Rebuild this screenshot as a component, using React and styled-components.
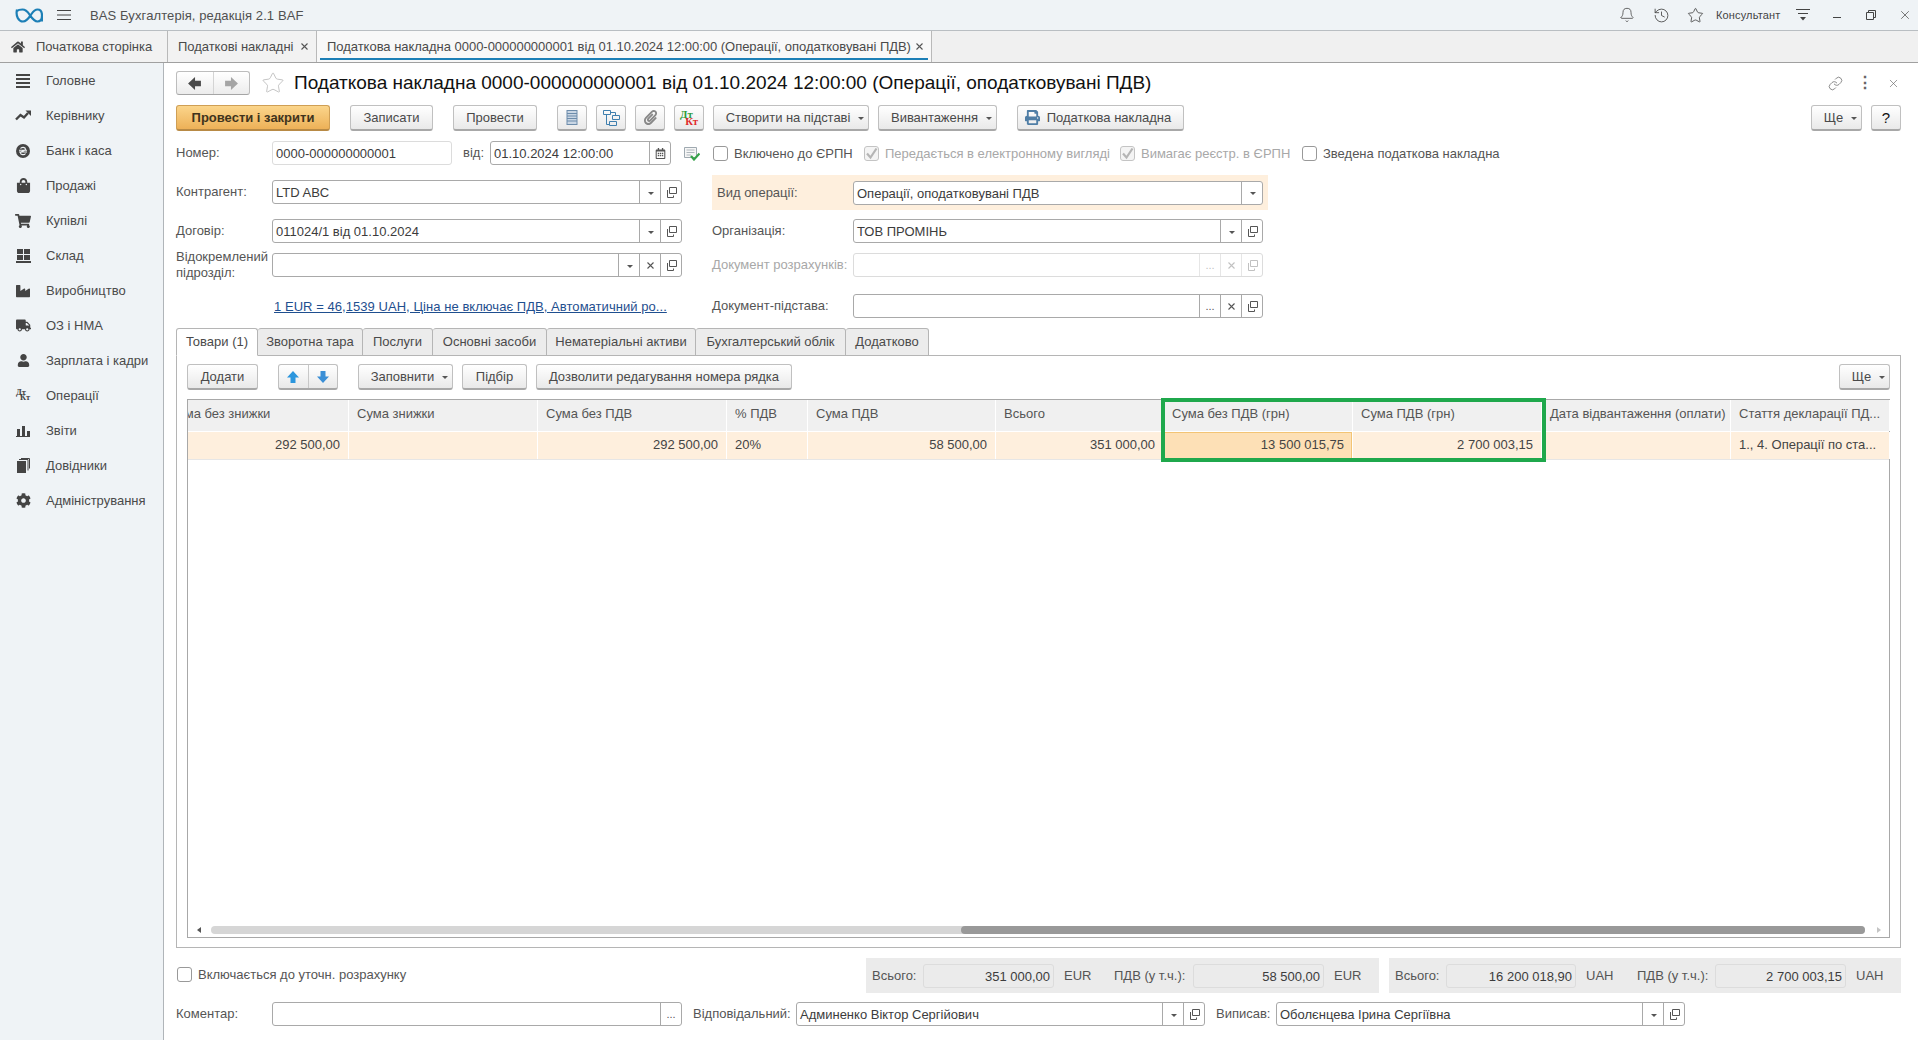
import React from "react";
import styled, { createGlobalStyle } from "styled-components";
import { Bell, History, Star, Link, X } from "lucide-react";
import {
  FaHome,
  FaShoppingBag,
  FaShoppingCart,
  FaIndustry,
  FaTruck,
  FaUser,
  FaCog,
  FaPrint,
  FaPaperclip,
  FaRegCalendarAlt,
} from "react-icons/fa";

const GlobalStyle = createGlobalStyle`
  html, body {
    margin: 0;
    padding: 0;
    height: 100%;
    overflow: hidden;
    background: #fff;
    font-family: "Liberation Sans", Arial, sans-serif;
    font-size: 13px;
    color: #4a4a4a;
  }
  * { box-sizing: border-box; }
`;

const AppWrap = styled.div`
  display: flex;
  flex-direction: column;
  width: 1918px;
  height: 1040px;
`;

/* top bar */
const TopBar = styled.div`
  display: flex;
  align-items: center;
  height: 31px;
  flex: none;
  padding-left: 15px;
  background: #eff3f6;
  border-bottom: 1px solid #b9bec2;
`;
const AppTitle = styled.div`
  margin-left: 5px;
  color: #505050;
  letter-spacing: 0.1px;
  white-space: nowrap;
`;
const TopIcons = styled.div`
  display: flex;
  align-items: center;
  margin-left: auto;
  color: #444;
`;
const TopIcon = styled.div`
  display: flex;
  align-items: center;
  justify-content: center;
  width: ${(p) => p.$w || 34}px;
`;
const Consultant = styled.div`
  font-size: 11px;
  width: 66px;
  margin-left: 4px;
  letter-spacing: 0.15px;
  white-space: nowrap;
`;

/* open windows */
const TabBar = styled.div`
  display: flex;
  height: 32px;
  flex: none;
  background: #f0f0f0;
  border-bottom: 1px solid #a0a0a0;
`;
const WinTab = styled.div`
  position: relative;
  display: flex;
  align-items: center;
  width: ${(p) => p.$w}px;
  padding-left: ${(p) => p.$pl || 10}px;
  border-right: 1px solid #b9b9b9;
  background: ${(p) => (p.$active ? "#f8f8f8" : "#f2f2f2")};
  letter-spacing: -0.03px;
  white-space: nowrap;
  color: #4a4a4a;
  &::after {
    content: "";
    display: ${(p) => (p.$active ? "block" : "none")};
    position: absolute;
    left: 3px;
    right: 3px;
    bottom: 2px;
    height: 2px;
    background: #1c7fb6;
  }
`;
const WinTabLabel = styled.span`
  margin-left: 11px;
`;
const WinClose = styled.span`
  display: inline-flex;
  margin-left: auto;
  margin-right: 8px;
  color: #555;
`;

const Body = styled.div`
  display: flex;
  flex: 1;
  min-height: 0;
`;

/* left menu */
const Sidebar = styled.div`
  width: 164px;
  flex: none;
  background: #eff3f6;
  border-right: 1px solid #b0b5b9;
`;
const NavItem = styled.div`
  display: flex;
  align-items: center;
  height: 35px;
  color: #4a4a4a;
`;
const NavIcon = styled.div`
  display: flex;
  align-items: center;
  justify-content: center;
  width: 46px;
  color: #444;
`;
const DtKt = styled.div`
  position: relative;
  width: ${(p) => p.$size}px;
  height: ${(p) => p.$size}px;
  font-family: "Liberation Serif", serif;
  font-weight: bold;
  font-size: ${(p) => p.$size * 0.6}px;
  line-height: 1;
`;
const Dt = styled.span`
  position: absolute;
  left: 0;
  top: 0;
  color: ${(p) => p.$c};
`;
const Kt = styled.span`
  position: absolute;
  right: 0;
  bottom: 0;
  color: ${(p) => p.$c};
`;

/* document form */
const Main = styled.div`
  display: flex;
  flex-direction: column;
  flex: 1;
  min-width: 0;
  padding: 8px 17px 14px 12px;
`;
const HeadRow = styled.div`
  display: flex;
  align-items: center;
  height: 24px;
  flex: none;
`;
const NavGroup = styled.div`
  display: flex;
  width: 74px;
  height: 24px;
  border: 1px solid #bdbdbd;
  border-bottom-color: #a5a5a5;
  border-radius: 3px;
  background: linear-gradient(#fff, #ececec);
`;
const NavBtn = styled.div`
  display: flex;
  align-items: center;
  justify-content: center;
  flex: 1;
  color: ${(p) => p.$c};
  & + & {
    border-left: 1px solid #d4d4d4;
  }
`;
const TitleStar = styled(Star)`
  margin-left: 11px;
`;
const DocTitle = styled.div`
  margin-left: 9px;
  font-size: 19px;
  color: #111;
  white-space: nowrap;
`;
const HeadIcons = styled.div`
  display: flex;
  align-items: center;
  gap: 14px;
  margin-left: auto;
  margin-right: 1px;
  color: #666;
`;
const Dots = styled.div`
  width: 16px;
  text-align: center;
  font-size: 16px;
  font-weight: bold;
  line-height: 10px;
`;

const ButtonRow = styled.div`
  display: flex;
  align-items: center;
  flex: none;
  margin-top: ${(p) => p.$mt || 0}px;
`;
const Btn = styled.div`
  display: flex;
  align-items: center;
  justify-content: center;
  gap: ${(p) => p.$gap || 6}px;
  flex: none;
  width: ${(p) => p.$w}px;
  height: 26px;
  margin-left: ${(p) => p.$ml || 0}px;
  padding-right: ${(p) => p.$pr || 0}px;
  border: 1px solid #c0c0c0;
  border-bottom: 2px solid #a8a8a8;
  border-radius: 3px;
  background: linear-gradient(#fff, #e9e9e9);
  color: #4a4a4a;
  white-space: nowrap;
`;
const DefaultBtn = styled(Btn)`
  border-color: #cf9f55;
  border-bottom-color: #b88a45;
  background: linear-gradient(#fbd58b, #edb158);
  color: #40331c;
  font-weight: bold;
`;
const MenuBtn = styled(Btn)`
  padding-left: 8px;
  letter-spacing: -0.05px;
`;
const MoreBtn = styled(MenuBtn)`
  margin-left: auto;
`;
const HelpBtn = styled(Btn)`
  color: #111;
  font-size: 15px;
`;
const Caret = styled.span`
  display: inline-block;
  width: 0;
  height: 0;
  margin-left: 2px;
  margin-top: 2px;
  border-left: 3px solid transparent;
  border-right: 3px solid transparent;
  border-top: 3px solid #555;
`;
const ArrowGroup = styled.div`
  display: flex;
  width: 60px;
  height: 26px;
  margin-left: 20px;
  border: 1px solid #c0c0c0;
  border-bottom: 2px solid #a8a8a8;
  border-radius: 3px;
  background: linear-gradient(#fff, #e9e9e9);
`;
const ArrowCell = styled.div`
  display: flex;
  align-items: center;
  justify-content: center;
  flex: 1;
  & + & {
    border-left: 1px solid #c8c8c8;
  }
`;

const FormRow = styled.div`
  display: flex;
  align-items: center;
  flex: none;
  height: 24px;
  margin-top: ${(p) => p.$mt || 0}px;
`;
const Label = styled.div`
  flex: none;
  width: ${(p) => p.$w}px;
  margin-left: ${(p) => p.$ml || 0}px;
  color: ${(p) => (p.$off ? "#a8a8a8" : "#555")};
  line-height: 16px;
  white-space: nowrap;
`;
const FieldBox = styled.div`
  display: flex;
  flex: none;
  width: ${(p) => p.$w}px;
  height: 24px;
  border: 1px solid ${(p) => (p.$soft ? "#dcdcdc" : "#a9a9a9")};
  border-radius: 3px;
  background: ${(p) => (p.$gray ? "#ebebeb" : "#fff")};
`;
const FieldText = styled.div`
  flex: 1;
  min-width: 0;
  padding: 0 3px;
  line-height: 23px;
  color: #3c3c3c;
  text-align: ${(p) => (p.$right ? "right" : "left")};
  white-space: nowrap;
  overflow: hidden;
`;
const FieldBtn = styled.div`
  display: flex;
  align-items: center;
  justify-content: center;
  flex: none;
  width: 21px;
  border-left: 1px solid ${(p) => (p.$soft ? "#dcdcdc" : "#a9a9a9")};
  color: ${(p) => (p.$soft ? "#a8a8a8" : "#555")};
  font-size: 11px;
  opacity: ${(p) => (p.$soft ? 0.7 : 1)};
`;
const CheckWrap = styled.div`
  display: flex;
  align-items: center;
  flex: none;
  width: ${(p) => p.$w}px;
  margin-left: ${(p) => p.$ml || 0}px;
  color: ${(p) => (p.$off ? "#a8a8a8" : "#555")};
  white-space: nowrap;
`;
const CheckBox = styled.span`
  display: flex;
  align-items: center;
  justify-content: center;
  width: 15px;
  height: 15px;
  margin-right: 6px;
  flex: none;
  border: 1px solid ${(p) => (p.$off ? "#c4c4c4" : "#999")};
  border-radius: 3px;
  background: ${(p) => (p.$off ? "#f4f4f4" : "#fff")};
`;

const Columns = styled.div`
  display: flex;
  flex: none;
  margin-top: 10px;
`;
const LeftCol = styled.div`
  width: 536px;
  flex: none;
  padding-top: 5px;
`;
const RightCol = styled.div`
  width: 556px;
  flex: none;
`;
const Peach = styled.div`
  display: flex;
  align-items: center;
  height: 35px;
  padding-left: 5px;
  background: #feefdd;
`;
const DocLink = styled.a`
  margin-left: 96px;
  padding-left: 2px;
  color: #1f4f8f;
  text-decoration: underline;
  letter-spacing: 0.05px;
  white-space: nowrap;
`;

/* tabbed part */
const TabStrip = styled.div`
  display: flex;
  flex: none;
  height: 28px;
  margin-top: 10px;
  margin-bottom: -1px;
  position: relative;
`;
const PageTab = styled.div`
  display: flex;
  align-items: center;
  justify-content: center;
  width: ${(p) => p.$w}px;
  padding-bottom: 2px;
  border: 1px solid #b5b5b5;
  border-left-width: ${(p) => (p.$first ? 1 : 0)}px;
  border-bottom-color: ${(p) => (p.$active ? "#fff" : "#b5b5b5")};
  border-radius: 3px 3px 0 0;
  background: ${(p) => (p.$active ? "#fff" : "#ececec")};
  color: #4a4a4a;
  white-space: nowrap;
`;
const Panel = styled.div`
  display: flex;
  flex-direction: column;
  flex: 1;
  min-height: 0;
  padding: 8px 10px 9px 10px;
  border: 1px solid #b5b5b5;
`;
const Table = styled.div`
  position: relative;
  display: flex;
  flex-direction: column;
  flex: 1;
  min-height: 0;
  margin-top: 9px;
  border: 1px solid #a8a8a8;
`;
const Row = styled.div`
  display: flex;
  flex: none;
  height: ${(p) => p.$h}px;
  background: ${(p) => p.$bg};
  border-bottom: 1px solid ${(p) => p.$line};
`;
const HeadCell = styled.div`
  flex: none;
  width: ${(p) => p.$w}px;
  padding-left: ${(p) => (p.$clip ? 0 : 8)}px;
  line-height: 28px;
  color: #555;
  border-right: 1px solid #fff;
  white-space: nowrap;
  overflow: hidden;
  text-indent: ${(p) => (p.$clip ? -19 : 0)}px;
`;
const Cell = styled.div`
  flex: none;
  width: ${(p) => p.$w}px;
  padding: 0 8px;
  line-height: 25px;
  color: #444;
  text-align: ${(p) => (p.$left ? "left" : "right")};
  border-right: 1px solid #fff;
  white-space: nowrap;
  overflow: hidden;
  background: ${(p) => (p.$current ? "#fde0b6" : "transparent")};
  box-shadow: ${(p) => (p.$current ? "inset 0 0 0 1px #f3c474" : "none")};
`;
const Highlight = styled.div`
  position: absolute;
  left: 973px;
  top: -2px;
  width: 385px;
  height: 64px;
  border: 4px solid #1fa84c;
  pointer-events: none;
`;
const ScrollRow = styled.div`
  display: flex;
  align-items: center;
  flex: none;
  height: 8px;
  margin-top: auto;
  margin-bottom: 3px;
  padding: 0 8px 0 9px;
`;
const ScrollTrack = styled.div`
  flex: 1;
  height: 8px;
  margin: 0 12px 0 10px;
  border-radius: 4px;
  background: #d6d6d6;
  display: flex;
  justify-content: flex-end;
`;
const ScrollThumb = styled.div`
  width: 904px;
  height: 8px;
  border-radius: 4px;
  background: #999;
`;
const ScrollArrow = styled.span`
  width: 0;
  height: 0;
  border-top: 3px solid transparent;
  border-bottom: 3px solid transparent;
  ${(p) =>
    p.$left
      ? "border-right: 4px solid #555;"
      : "border-left: 4px solid #c4c4c4;"}
`;

/* footer */
const TotalsLine = styled.div`
  display: flex;
  align-items: center;
  flex: none;
  height: 35px;
  margin-top: 10px;
`;
const TotalCheck = styled(CheckWrap)`
  padding-bottom: 2px;
  padding-left: 1px;
`;
const TotalGroup = styled.div`
  display: flex;
  align-items: center;
  flex: none;
  width: ${(p) => p.$w}px;
  height: 35px;
  margin-left: ${(p) => p.$ml}px;
  padding-left: 6px;
  background: #ebebeb;
`;
const Unit = styled.div`
  flex: none;
  width: ${(p) => p.$w}px;
  padding-left: 10px;
  color: #555;
`;

const columns = [
  { title: "Сума без знижки", value: "292 500,00", w: 161, clip: true },
  { title: "Сума знижки", value: "", w: 189 },
  { title: "Сума без ПДВ", value: "292 500,00", w: 189 },
  { title: "% ПДВ", value: "20%", w: 81, left: true },
  { title: "Сума ПДВ", value: "58 500,00", w: 188 },
  { title: "Всього", value: "351 000,00", w: 168 },
  { title: "Сума без ПДВ (грн)", value: "13 500 015,75", w: 189, current: true },
  { title: "Сума ПДВ (грн)", value: "2 700 003,15", w: 189 },
  { title: "Дата відвантаження (оплати)", value: "", w: 189 },
  { title: "Стаття декларації ПД...", value: "1., 4. Операції по ста...", w: 159, left: true },
];

const pageTabs = [
  { name: "Товари (1)", w: 82, active: true },
  { name: "Зворотна тара", w: 105 },
  { name: "Послуги", w: 70 },
  { name: "Основні засоби", w: 114 },
  { name: "Нематеріальні активи", w: 149 },
  { name: "Бухгалтерський облік", w: 150 },
  { name: "Додатково", w: 83 },
];

const LogoMark = () => (
  <svg width="28" height="15" viewBox="0 0 28 15" fill="none" stroke="#1c7fb6" strokeWidth="2.2">
    <path d="M2 1.5C0.5 8 3.5 13.5 8 13.5C12 13.5 14.5 9 16.5 6C18.5 3 20 1.5 22.5 1.5C25.5 1.5 27 4 27 7.5V13.5M27 7.5C27 11 25.5 13.5 22.5 13.5C19 13.5 16.5 9.5 14.5 6.5C12.5 3.5 10.5 1.5 7.5 1.5C5.5 1.5 3.5 1.5 2 3" />
  </svg>
);

const Burger = () => (
  <svg width="14" height="12" viewBox="0 0 14 12" stroke="#444" strokeWidth="1">
    <path d="M0 1.5H14M0 6H14M0 10.5H14" />
  </svg>
);

const LinesIcon = () => (
  <svg width="14" height="14" viewBox="0 0 14 14" fill="#444">
    <path d="M0 0h14v2H0zM0 4h14v2H0zM0 8h14v2H0zM0 12h14v2H0z" />
  </svg>
);

const TrendIcon = () => (
  <svg width="16" height="11" viewBox="0 0 16 11">
    <path d="M1 9.5L5.5 5L9 7.5L13 3" fill="none" stroke="#444" strokeWidth="2.4" />
    <path d="M10.5 0.5H16V6z" fill="#444" />
  </svg>
);

const BankIcon = () => (
  <svg width="14" height="14" viewBox="0 0 14 14">
    <circle cx="7" cy="7" r="7" fill="#444" />
    <path d="M4.5 4.6C5.5 2.8 9.5 3 9.5 5.2C9.5 7.2 4.5 6.8 4.5 8.9C4.5 11 8.5 11.2 9.5 9.4M3 6.2H11M3 8H11" fill="none" stroke="#eff3f6" strokeWidth="1.1" />
  </svg>
);

const GridIcon = () => (
  <svg width="15" height="14" viewBox="0 0 15 14" fill="#444">
    <path d="M1 0h6v5H1zM8 0h6v5H8zM1 6h6v5H1zM8 6h6v5H8zM0 12h15v2H0z" />
  </svg>
);

const BarsIcon = () => (
  <svg width="14" height="12" viewBox="0 0 14 12" fill="#444">
    <path d="M1 4h3v7H1zM6 1h3v10H6zM11 6h3v5h-3zM0 11h14v1H0z" />
  </svg>
);

const BooksIcon = () => (
  <svg width="13" height="15" viewBox="0 0 13 15">
    <path d="M0 3h9v12H0z" fill="#444" />
    <path d="M2 1.5h9v11M4 0.5h8.5v10" fill="none" stroke="#444" strokeWidth="1" />
  </svg>
);

// block arrow pointing up, rotated for the other directions
const BlockArrow = ({ color, rotate = 0, size = 14 }) => (
  <svg width={size} height={size} viewBox="0 0 14 14" transform={`rotate(${rotate})`}>
    <path d="M7 1L13 7.5H9.5V13H4.5V7.5H1z" fill={color} />
  </svg>
);

const menu = [
  { name: "Головне", icon: <LinesIcon /> },
  { name: "Керівнику", icon: <TrendIcon /> },
  { name: "Банк і каса", icon: <BankIcon /> },
  { name: "Продажі", icon: <FaShoppingBag size={15} /> },
  { name: "Купівлі", icon: <FaShoppingCart size={16} /> },
  { name: "Склад", icon: <GridIcon /> },
  { name: "Виробництво", icon: <FaIndustry size={14} /> },
  { name: "ОЗ і НМА", icon: <FaTruck size={15} /> },
  { name: "Зарплата і кадри", icon: <FaUser size={13} /> },
  {
    name: "Операції",
    icon: (
      <DtKt $size={14}>
        <Dt $c="#444">Дт</Dt>
        <Kt $c="#444">Кт</Kt>
      </DtKt>
    ),
  },
  { name: "Звіти", icon: <BarsIcon /> },
  { name: "Довідники", icon: <BooksIcon /> },
  { name: "Адміністрування", icon: <FaCog size={15} /> },
];

const OpenIcon = () => (
  <svg width="11" height="11" viewBox="0 0 11 11" fill="none" stroke="currentColor" strokeWidth="1">
    <path d="M3.5 0.5h7v6h-7zM1.5 3v7.5H7.5V8.5" />
  </svg>
);

const ClearIcon = () => (
  <svg width="7" height="7" viewBox="0 0 7 7" stroke="currentColor" strokeWidth="1.1">
    <path d="M0.5 0.5L6.5 6.5M6.5 0.5L0.5 6.5" />
  </svg>
);

const buttonIcons = {
  drop: <Caret />,
  clear: <ClearIcon />,
  open: <OpenIcon />,
  dots: "...",
  cal: <FaRegCalendarAlt size={11} />,
};

const Field = ({ w, value, buttons = [], soft, gray, right }) => (
  <FieldBox $w={w} $soft={soft} $gray={gray}>
    <FieldText $right={right}>{value}</FieldText>
    {buttons.map((b) => (
      <FieldBtn key={b} $soft={soft}>
        {buttonIcons[b]}
      </FieldBtn>
    ))}
  </FieldBox>
);

const Check = ({ w, checked, off, children }) => (
  <CheckWrap $w={w} $off={off}>
    <CheckBox $off={off}>
      {checked && (
        <svg width="13" height="13" viewBox="0 0 13 13" fill="none" stroke="#b5b5b5" strokeWidth="2.2">
          <path d="M2 6.5L5.5 10.5L11.5 1.5" />
        </svg>
      )}
    </CheckBox>
    {children}
  </CheckWrap>
);

const RegisterIcon = () => (
  <svg width="12" height="15" viewBox="0 0 12 15">
    <rect x="1" y="0.5" width="10" height="14" fill="#c9d6e4" stroke="#6c8cab" />
    <path d="M1 3.5H11M1 6H11M1 8.5H11M1 11H11" stroke="#6c8cab" />
  </svg>
);

const StructureIcon = () => (
  <svg width="17" height="16" viewBox="0 0 17 16" fill="none" stroke="#3f7fae" strokeWidth="1">
    <path d="M0.5 0.5h7v4h-7zM9.5 5.5h7v4h-7zM6.5 11.5h7v4h-7zM3.5 4.5v10h3M7.5 2.5h5v3" />
  </svg>
);

const DocCheckIcon = () => (
  <svg width="16" height="15" viewBox="0 0 16 15">
    <path d="M0.5 1.5h12v10h-12z" fill="#f6f6f6" stroke="#9fa9b0" />
    <path d="M2.5 4H10.5M2.5 6.5H10.5M2.5 9H7" stroke="#aeb6bc" />
    <path d="M7 10L10 13.5L15.5 7.5" fill="none" stroke="#37a24a" strokeWidth="2.2" />
  </svg>
);

const FilterIcon = () => (
  <svg width="16" height="14" viewBox="0 0 16 14" fill="#444">
    <path d="M1 1h14v1H1zM3 5h10v1H3z" />
    <path d="M5 9h6l-3 3.5z" />
  </svg>
);

const App = () => {
  return (
    <AppWrap>
      <GlobalStyle />
      <TopBar>
        <LogoMark />
        <TopIcon $w={42}>
          <Burger />
        </TopIcon>
        <AppTitle>BAS Бухгалтерія, редакція 2.1 BAF</AppTitle>
        <TopIcons>
          <TopIcon>
            <Bell size={16} strokeWidth={1.2} />
          </TopIcon>
          <TopIcon>
            <History size={17} strokeWidth={1.2} />
          </TopIcon>
          <TopIcon>
            <Star size={17} strokeWidth={1.2} />
          </TopIcon>
          <Consultant>Консультант</Consultant>
          <TopIcon $w={42}>
            <FilterIcon />
          </TopIcon>
          <TopIcon $w={26}>
            <svg width="10" height="10" viewBox="0 0 10 10" stroke="#444">
              <path d="M1 7.5H9" />
            </svg>
          </TopIcon>
          <TopIcon $w={42}>
            <svg width="10" height="10" viewBox="0 0 10 10" fill="none" stroke="#444">
              <path d="M0.5 2.5h7v7h-7zM2.5 2.5v-2h7v7h-2" />
            </svg>
          </TopIcon>
          <TopIcon $w={26}>
            <X size={14} strokeWidth={1.2} />
          </TopIcon>
        </TopIcons>
      </TopBar>

      <TabBar>
        <WinTab $w={168} $pl={11}>
          <FaHome size={14} color="#444" />
          <WinTabLabel>Початкова сторінка</WinTabLabel>
        </WinTab>
        <WinTab $w={149} $pl={10}>
          Податкові накладні
          <WinClose>
            <ClearIcon />
          </WinClose>
        </WinTab>
        <WinTab $w={615} $pl={10} $active>
          Податкова накладна 0000-000000000001 від 01.10.2024 12:00:00 (Операції, оподатковувані ПДВ)
          <WinClose>
            <ClearIcon />
          </WinClose>
        </WinTab>
      </TabBar>

      <Body>
        <Sidebar>
          {menu.map((m) => (
            <NavItem key={m.name}>
              <NavIcon>{m.icon}</NavIcon>
              {m.name}
            </NavItem>
          ))}
        </Sidebar>

        <Main>
          <HeadRow>
            <NavGroup>
              <NavBtn $c="#4a4a4a">
                <BlockArrow color="#4a4a4a" rotate={-90} size={15} />
              </NavBtn>
              <NavBtn $c="#a5a5a5">
                <BlockArrow color="#a5a5a5" rotate={90} size={15} />
              </NavBtn>
            </NavGroup>
            <TitleStar size={24} strokeWidth={0.8} color="#b5b5b5" />
            <DocTitle>
              Податкова накладна 0000-000000000001 від 01.10.2024 12:00:00 (Операції, оподатковувані ПДВ)
            </DocTitle>
            <HeadIcons>
              <Link size={15} strokeWidth={1.2} />
              <Dots>⋮</Dots>
              <X size={13} strokeWidth={1.2} />
            </HeadIcons>
          </HeadRow>

          <ButtonRow $mt={10}>
            <DefaultBtn $w={154}>Провести і закрити</DefaultBtn>
            <Btn $w={83} $ml={20}>Записати</Btn>
            <Btn $w={84} $ml={20}>Провести</Btn>
            <Btn $w={30} $ml={20}><RegisterIcon /></Btn>
            <Btn $w={30} $ml={9}><StructureIcon /></Btn>
            <Btn $w={30} $ml={9}><FaPaperclip size={15} color="#888" /></Btn>
            <Btn $w={30} $ml={9}>
              <DtKt $size={18}>
                <Dt $c="#2e9b3a">Дт</Dt>
                <Kt $c="#e0292b">Кт</Kt>
              </DtKt>
            </Btn>
            <MenuBtn $w={156} $ml={9}>Створити на підставі <Caret /></MenuBtn>
            <MenuBtn $w={119} $ml={9}>Вивантаження <Caret /></MenuBtn>
            <Btn $w={167} $ml={20} $pr={5} $gap={7}>
              <FaPrint size={15} color="#4f7ea6" />
              Податкова накладна
            </Btn>
            <MoreBtn $w={51}>Ще <Caret /></MoreBtn>
            <HelpBtn $w={30} $ml={9}>?</HelpBtn>
          </ButtonRow>

          <FormRow $mt={10}>
            <Label $w={96}>Номер:</Label>
            <Field w={180} value="0000-000000000001" soft />
            <Label $w={27} $ml={11}>від:</Label>
            <Field w={181} value="01.10.2024 12:00:00" buttons={["cal"]} />
            <CheckWrap $w={29} $ml={13}>
              <DocCheckIcon />
            </CheckWrap>
            <Check w={151}>Включено до ЄРПН</Check>
            <Check w={256} checked off>Передається в електронному вигляді</Check>
            <Check w={182} checked off>Вимагає реєстр. в ЄРПН</Check>
            <Check w={220}>Зведена податкова накладна</Check>
          </FormRow>

          <Columns>
            <LeftCol>
              <FormRow>
                <Label $w={96}>Контрагент:</Label>
                <Field w={410} value="LTD ABC" buttons={["drop", "open"]} />
              </FormRow>
              <FormRow $mt={15}>
                <Label $w={96}>Договір:</Label>
                <Field w={410} value="011024/1 від 01.10.2024" buttons={["drop", "open"]} />
              </FormRow>
              <FormRow $mt={10}>
                <Label $w={96}>
                  Відокремлений
                  <br />
                  підрозділ:
                </Label>
                <Field w={410} value="" buttons={["drop", "clear", "open"]} />
              </FormRow>
              <FormRow $mt={17}>
                <DocLink>1 EUR = 46,1539 UAH, Ціна не включає ПДВ, Автоматичний ро...</DocLink>
              </FormRow>
            </LeftCol>
            <RightCol>
              <Peach>
                <Label $w={136}>Вид операції:</Label>
                <Field w={410} value="Операції, оподатковувані ПДВ" buttons={["drop"]} />
              </Peach>
              <FormRow $mt={9}>
                <Label $w={141}>Організація:</Label>
                <Field w={410} value="ТОВ ПРОМІНЬ" buttons={["drop", "open"]} />
              </FormRow>
              <FormRow $mt={10}>
                <Label $w={141} $off>Документ розрахунків:</Label>
                <Field w={410} value="" soft buttons={["dots", "clear", "open"]} />
              </FormRow>
              <FormRow $mt={17}>
                <Label $w={141}>Документ-підстава:</Label>
                <Field w={410} value="" buttons={["dots", "clear", "open"]} />
              </FormRow>
            </RightCol>
          </Columns>

          <TabStrip>
            {pageTabs.map((t, i) => (
              <PageTab key={t.name} $w={t.w} $first={i === 0} $active={t.active}>
                {t.name}
              </PageTab>
            ))}
          </TabStrip>

          <Panel>
            <ButtonRow>
              <Btn $w={71}>Додати</Btn>
              <ArrowGroup>
                <ArrowCell>
                  <BlockArrow color="#2c96dd" />
                </ArrowCell>
                <ArrowCell>
                  <BlockArrow color="#3b8fd6" rotate={180} />
                </ArrowCell>
              </ArrowGroup>
              <MenuBtn $w={95} $ml={20}>Заповнити <Caret /></MenuBtn>
              <Btn $w={65} $ml={9}>Підбір</Btn>
              <Btn $w={256} $ml={9}>Дозволити редагування номера рядка</Btn>
              <MoreBtn $w={51}>Ще <Caret /></MoreBtn>
            </ButtonRow>

            <Table>
              <Row $h={32} $bg="#f0f0f0" $line="#fff">
                {columns.map((c) => (
                  <HeadCell key={c.title} $w={c.w} $clip={c.clip}>
                    {c.title}
                  </HeadCell>
                ))}
              </Row>
              <Row $h={28} $bg="#feefdd" $line="#e6e6e6">
                {columns.map((c) => (
                  <Cell key={c.title} $w={c.w} $left={c.left} $current={c.current}>
                    {c.value}
                  </Cell>
                ))}
              </Row>
              <Highlight />
              <ScrollRow>
                <ScrollArrow $left />
                <ScrollTrack>
                  <ScrollThumb />
                </ScrollTrack>
                <ScrollArrow />
              </ScrollRow>
            </Table>
          </Panel>

          <TotalsLine>
            <TotalCheck $w={300}>
              <CheckBox />
              Включається до уточн. розрахунку
            </TotalCheck>
            <TotalGroup $w={513} $ml={390}>
              <Label $w={51}>Всього:</Label>
              <Field w={131} value="351 000,00" soft gray right />
              <Unit $w={60}>EUR</Unit>
              <Label $w={79}>ПДВ (у т.ч.):</Label>
              <Field w={131} value="58 500,00" soft gray right />
              <Unit $w={45}>EUR</Unit>
            </TotalGroup>
            <TotalGroup $w={512} $ml={10}>
              <Label $w={51}>Всього:</Label>
              <Field w={130} value="16 200 018,90" soft gray right />
              <Unit $w={61}>UAH</Unit>
              <Label $w={78}>ПДВ (у т.ч.):</Label>
              <Field w={131} value="2 700 003,15" soft gray right />
              <Unit $w={45}>UAH</Unit>
            </TotalGroup>
          </TotalsLine>

          <FormRow $mt={9}>
            <Label $w={96}>Коментар:</Label>
            <Field w={410} value="" buttons={["dots"]} />
            <Label $w={103} $ml={11}>Відповідальний:</Label>
            <Field w={409} value="Админенко Віктор Сергійович" buttons={["drop", "open"]} />
            <Label $w={60} $ml={11}>Виписав:</Label>
            <Field w={409} value="Оболєнцева Ірина Сергіївна" buttons={["drop", "open"]} />
          </FormRow>
        </Main>
      </Body>
    </AppWrap>
  );
};

export default App;
